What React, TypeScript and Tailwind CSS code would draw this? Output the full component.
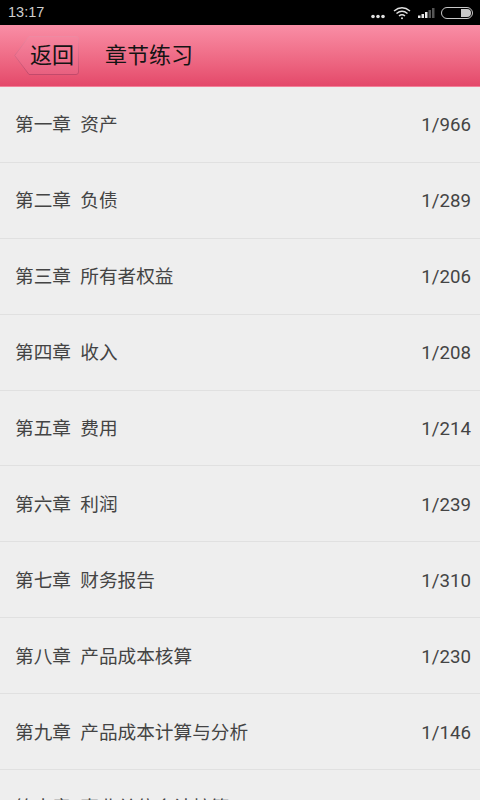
const chapters = [
  { title: "第一章  资产", count: "1/966" },
  { title: "第二章  负债", count: "1/289" },
  { title: "第三章  所有者权益", count: "1/206" },
  { title: "第四章  收入", count: "1/208" },
  { title: "第五章  费用", count: "1/214" },
  { title: "第六章  利润", count: "1/239" },
  { title: "第七章  财务报告", count: "1/310" },
  { title: "第八章  产品成本核算", count: "1/230" },
  { title: "第九章  产品成本计算与分析", count: "1/146" },
  { title: "第十章  事业单位会计核算", count: "" },
];

function StatusBar() {
  return (
    <div className="flex h-[25px] items-center justify-between bg-black pl-2 pr-[7px]">
      <span className="font-['Liberation_Sans',sans-serif] text-[14.5px] text-[#cfcfcf]">13:17</span>
      <div className="flex items-center">
        <svg width="14" height="5" viewBox="0 0 14 5" className="mr-[8px] mt-[7px]">
          <circle cx="2" cy="2.5" r="1.8" fill="#e0e0e0" />
          <circle cx="7" cy="2.5" r="1.8" fill="#e0e0e0" />
          <circle cx="12" cy="2.5" r="1.8" fill="#e0e0e0" />
        </svg>
        <svg width="18" height="14" viewBox="0 0 18 14" fill="none" stroke="#e0e0e0" strokeWidth="1.5" className="mr-[7px]">
          <path d="M1 5 Q9 -1.5 17 5" />
          <path d="M3.5 7.5 Q9 3 14.5 7.5" />
          <path d="M6 10 Q9 7.5 12 10" />
          <circle cx="9" cy="12.3" r="1" fill="#e0e0e0" stroke="none" />
        </svg>
        <svg width="17" height="10" viewBox="0 0 17 10" className="mr-[6px] mt-[1px]">
          <rect x="0" y="7.5" width="2.5" height="2.5" fill="#e8e8e8" />
          <rect x="3.5" y="6" width="2.5" height="4" fill="#e8e8e8" />
          <rect x="7" y="4" width="2.5" height="6" fill="#e8e8e8" />
          <rect x="10.5" y="2" width="2.5" height="8" fill="#555" />
          <rect x="14" y="0" width="2.5" height="10" fill="#555" />
        </svg>
        <div className="flex h-[12px] w-[32px] items-center justify-end rounded-full border border-[#c8c8c8] p-px">
          <div className="h-full w-[10px] rounded-r-full bg-[#c8c8c8]" />
        </div>
      </div>
    </div>
  );
}

function BackButton() {
  return (
    <button className="relative ml-[14px] flex h-[39px] w-[65px] items-center justify-end pr-[5px] text-[22px] text-[#141414]">
      <svg width="65" height="39" viewBox="0 0 65 39" className="absolute left-0 top-0">
        <defs>
          <linearGradient id="backFill" x1="0" y1="0" x2="0" y2="1">
            <stop offset="0" stopColor="#f6859e" />
            <stop offset="1" stopColor="#e8607f" />
          </linearGradient>
          <linearGradient id="backEdge" x1="0" y1="0" x2="0" y2="1">
            <stop offset="0" stopColor="#ee8aa2" />
            <stop offset="1" stopColor="#c24a6b" />
          </linearGradient>
        </defs>
        <path
          d="M15 0.5 H62 Q64.5 0.5 64.5 3 V36 Q64.5 38.5 62 38.5 H15 L0.7 19.5 Z"
          fill="url(#backFill)"
          stroke="url(#backEdge)"
        />
      </svg>
      <span className="relative">返回</span>
    </button>
  );
}

export default function App() {
  return (
    <div className="h-[800px] w-[480px] overflow-hidden bg-[#eeeeee] font-['Roboto','Noto_Sans_CJK_SC',sans-serif]">
      <StatusBar />
      <div className="flex h-[62px] items-center border-b border-[#f37f98] bg-gradient-to-b from-[#f98ea6] to-[#e4486a]">
        <BackButton />
        <h1 className="ml-[26px] text-[22px] font-normal text-[#141414]">章节练习</h1>
      </div>
      <ul>
        {chapters.map((chapter) => (
          <li
            key={chapter.title}
            className="flex h-[75.9px] items-center justify-between border-b border-[#e0e0e0] pl-[15px] pr-[9px] pt-[2px] text-[18.67px] text-[#444444]"
          >
            <span className="whitespace-pre">{chapter.title}</span>
            <span>{chapter.count}</span>
          </li>
        ))}
      </ul>
    </div>
  );
}
